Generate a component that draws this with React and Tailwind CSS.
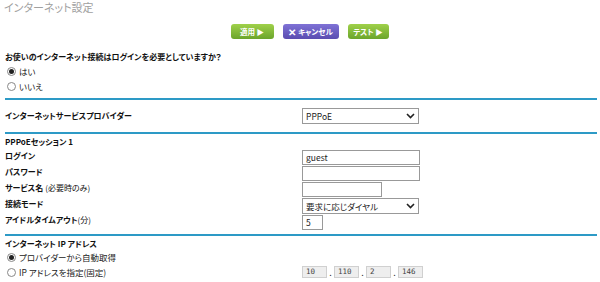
import React from 'react';

const jp = { fontFamily: '"Noto Sans CJK JP", "Liberation Sans", sans-serif' };

function Radio({ checked, label }) {
  return (
    <div className="flex items-center h-[15px] pl-[2px]">
      <span className="w-[9px] h-[9px] rounded-full border border-[#888] bg-white flex items-center justify-center">
        {checked && <span className="w-[5px] h-[5px] rounded-full bg-[#222]" />}
      </span>
      <span className="ml-[3px] text-[8.5px] text-[#222]">{label}</span>
    </div>
  );
}

function Btn({ color, children }) {
  return (
    <button className={`h-[15px] rounded-[3px] flex items-center justify-center whitespace-nowrap text-white text-[7.5px] font-bold leading-none ${color}`}>
      {children}
    </button>
  );
}

function Select({ value }) {
  return (
    <div className="w-[117px] h-[16px] border border-[#999] bg-white flex items-center justify-between px-[3px] text-[8.5px] text-[#222]">
      <span>{value}</span>
      <svg width="9" height="6" viewBox="0 0 9 6"><path d="M1 1 L4.5 4.5 L8 1" stroke="#222" strokeWidth="1.6" fill="none" /></svg>
    </div>
  );
}

function Field({ w, value }) {
  return (
    <div className={`${w} h-[15px] border border-[#999] bg-white px-[3px] flex items-center text-[8.5px] text-[#222]`}>{value}</div>
  );
}

function Label({ children, note, gap = 'ml-[2px]', h = 'h-[16px]' }) {
  return (
    <div className={`${h} flex items-center whitespace-nowrap text-[8px] font-bold text-[#111]`}>
      {children}
      {note && <span className={`font-normal ${gap}`}>{note}</span>}
    </div>
  );
}

const Line = () => <div className="h-[2px] bg-[#2d9ac6] mr-[3px]" />;

export default function App() {
  const ip = ['10', '110', '2', '146'];
  return (
    <div className="w-[600px] h-[282px] bg-white pl-[5px] overflow-hidden [font-feature-settings:'palt']" style={jp}>
      <div className="h-[16px] text-[11px] text-[#a0a0a0] -ml-[1px] leading-[14px]">インターネット設定</div>

      <div className="flex justify-center gap-[9px] pl-[14px] mt-[8px]">
        <Btn color="w-[43px] bg-gradient-to-b from-[#9fd14a] to-[#6ba52b]">適用 ▶</Btn>
        <Btn color="w-[56px] bg-gradient-to-b from-[#7f72d6] to-[#5a4cb0]"><span className="text-[10px] mr-[2px]">✕</span>キャンセル</Btn>
        <Btn color="w-[41px] bg-gradient-to-b from-[#9fd14a] to-[#6ba52b]">テスト ▶</Btn>
      </div>

      <div className="mt-[11px] h-[14px] text-[8px] font-bold text-[#111] flex items-center">お使いのインターネット接続はログインを必要としていますか？</div>
      <Radio checked label="はい" />
      <Radio label="いいえ" />
      <div className="h-[4px]" />
      <Line />

      <div className="flex items-center h-[32px]">
        <div className="w-[297px] text-[8px] font-bold text-[#111]">インターネットサービスプロバイダー</div>
        <Select value="PPPoE" />
      </div>
      <Line />

      <div className="flex mt-[2px]">
        <div className="w-[297px]">
          <Label h="h-[12px]">PPPoEセッション 1</Label>
          <Label>ログイン</Label>
          <Label>パスワード</Label>
          <Label note="(必要時のみ)">サービス名</Label>
          <Label>接続モード</Label>
          <Label note="(分)" gap="ml-0">アイドルタイムアウト</Label>
        </div>
        <div className="pt-[14px] flex flex-col gap-[1px]">
          <Field w="w-[118px]" value="guest" />
          <Field w="w-[118px]" />
          <Field w="w-[80px]" />
          <Select value="要求に応じダイヤル" />
          <Field w="w-[21px]" value="5" />
        </div>
      </div>
      <div className="h-[4px]" />
      <Line />

      <div className="flex items-start mt-[2px]">
        <div className="w-[297px]">
          <Label h="h-[12px]">インターネット IP アドレス</Label>
          <Radio checked label="プロバイダーから自動取得" />
          <Radio label="IP アドレスを指定(固定)" />
        </div>
        <div className="mt-[28px] flex items-center">
          {ip.map((v, i) => (
            <React.Fragment key={i}>
              {i > 0 && <span className="w-[7px] text-center text-[9px] leading-none text-[#333]">.</span>}
              <div className="w-[25px] h-[12px] bg-[#eeeeee] border border-[#d0d0d0] px-[3px] flex items-center text-[7.5px] leading-none text-[#444]" style={{ fontFamily: '"DejaVu Sans Mono", monospace' }}>{v}</div>
            </React.Fragment>
          ))}
        </div>
      </div>
      <div className="h-[2px]" />
      <Line />
    </div>
  );
}
